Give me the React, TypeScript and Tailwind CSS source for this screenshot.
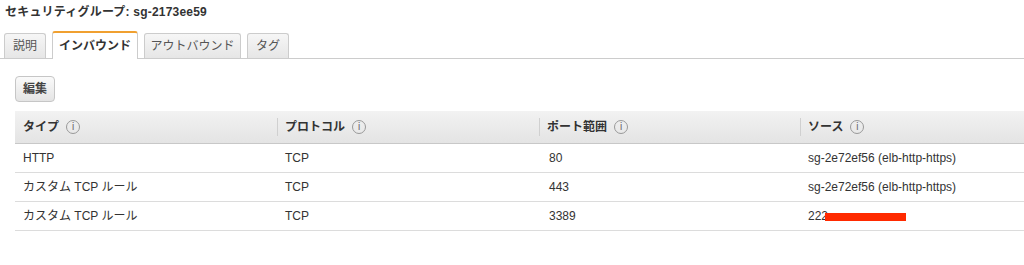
const rows = [
  { type: 'HTTP', protocol: 'TCP', port: '80', source: 'sg-2e72ef56 (elb-http-https)' },
  { type: 'カスタム TCP ルール', protocol: 'TCP', port: '443', source: 'sg-2e72ef56 (elb-http-https)' },
  { type: 'カスタム TCP ルール', protocol: 'TCP', port: '3389', source: '222', redacted: true },
];

function InfoIcon() {
  return (
    <span className="ml-[7px] inline-flex h-[14px] w-[14px] items-center justify-center rounded-full border border-[#999] text-[10px] leading-none font-normal text-[#666]">
      i
    </span>
  );
}

const cols = ['w-[262px]', 'w-[262px]', 'w-[261px]', 'flex-1'];

export default function App() {
  const tabs = ['説明', 'インバウンド', 'アウトバウンド', 'タグ'];
  const headers = ['タイプ', 'プロトコル', 'ポート範囲', 'ソース'];

  return (
    <div
      className="h-[265px] w-[1024px] overflow-hidden bg-white text-[12px] text-[#333]"
      style={{ fontFamily: '"Liberation Sans", "Noto Sans CJK JP", sans-serif' }}
    >
      <div className="px-[5px] pt-[3px] text-[12px] font-bold tracking-[0.2px] text-[#333]">セキュリティグループ: sg-2173ee59</div>

      {/* Tabs */}
      <div className="mt-[10px] flex items-end gap-[6px] border-b border-[#ccc] pl-[4px]">
        {tabs.map((t, i) =>
          i === 1 ? (
            <div
              key={t}
              className="-mb-px flex h-[28px] w-[86px] items-center justify-center rounded-t-[3px] border border-b-0 border-[#ccc] border-t-2 border-t-[#f0a030] bg-white text-[12px] font-bold text-[#333]"
            >
              {t}
            </div>
          ) : (
            <div
              key={t}
              className={`flex h-[25px] items-center justify-center rounded-t-[3px] border border-b-0 border-[#ccc] bg-gradient-to-b from-[#f6f6f6] to-[#e6e6e6] text-[12px] text-[#555] ${
                i === 2 ? 'w-[97px]' : 'w-[42px]'
              }`}
            >
              {t}
            </div>
          )
        )}
      </div>

      <div className="pl-[15px]">
        <button className="mt-[17px] flex h-[26px] w-[40px] items-center justify-center rounded-[4px] border border-[#c6c6c6] bg-gradient-to-b from-[#fafafa] to-[#e4e4e4] text-[12px] font-bold text-[#444]">
          編集
        </button>

        {/* Table */}
        <div className="mt-[9px]">
          <div className="flex h-[33px] items-center border-b border-[#c8c8c8] bg-gradient-to-b from-[#f2f2f2] to-[#e4e4e4] font-bold text-[#333]">
            {headers.map((h, i) => (
              <div key={h} className={`${cols[i]} flex h-full items-center`}>
                {i > 0 && <span className="mr-[7px] h-[18px] w-px bg-[#d0d0d0]" />}
                <span className={i === 0 ? 'pl-[8px]' : ''}>{h}</span>
                <InfoIcon />
              </div>
            ))}
          </div>
          {rows.map((r, idx) => (
            <div key={idx} className="flex h-[29px] items-center border-b border-[#dcdcdc] text-[#333]">
              <div className={`${cols[0]} pl-[8px]`}>{r.type}</div>
              <div className={`${cols[1]} pl-[8px]`}>{r.protocol}</div>
              <div className={`${cols[2]} pl-[10px]`}>{r.port}</div>
              <div className={`${cols[3]} flex items-center pl-[8px]`}>
                {r.source}
                {r.redacted && <span className="-ml-[3px] mt-[1px] h-[8px] w-[81px] bg-[#ff2a00]" />}
              </div>
            </div>
          ))}
        </div>
      </div>
    </div>
  );
}
